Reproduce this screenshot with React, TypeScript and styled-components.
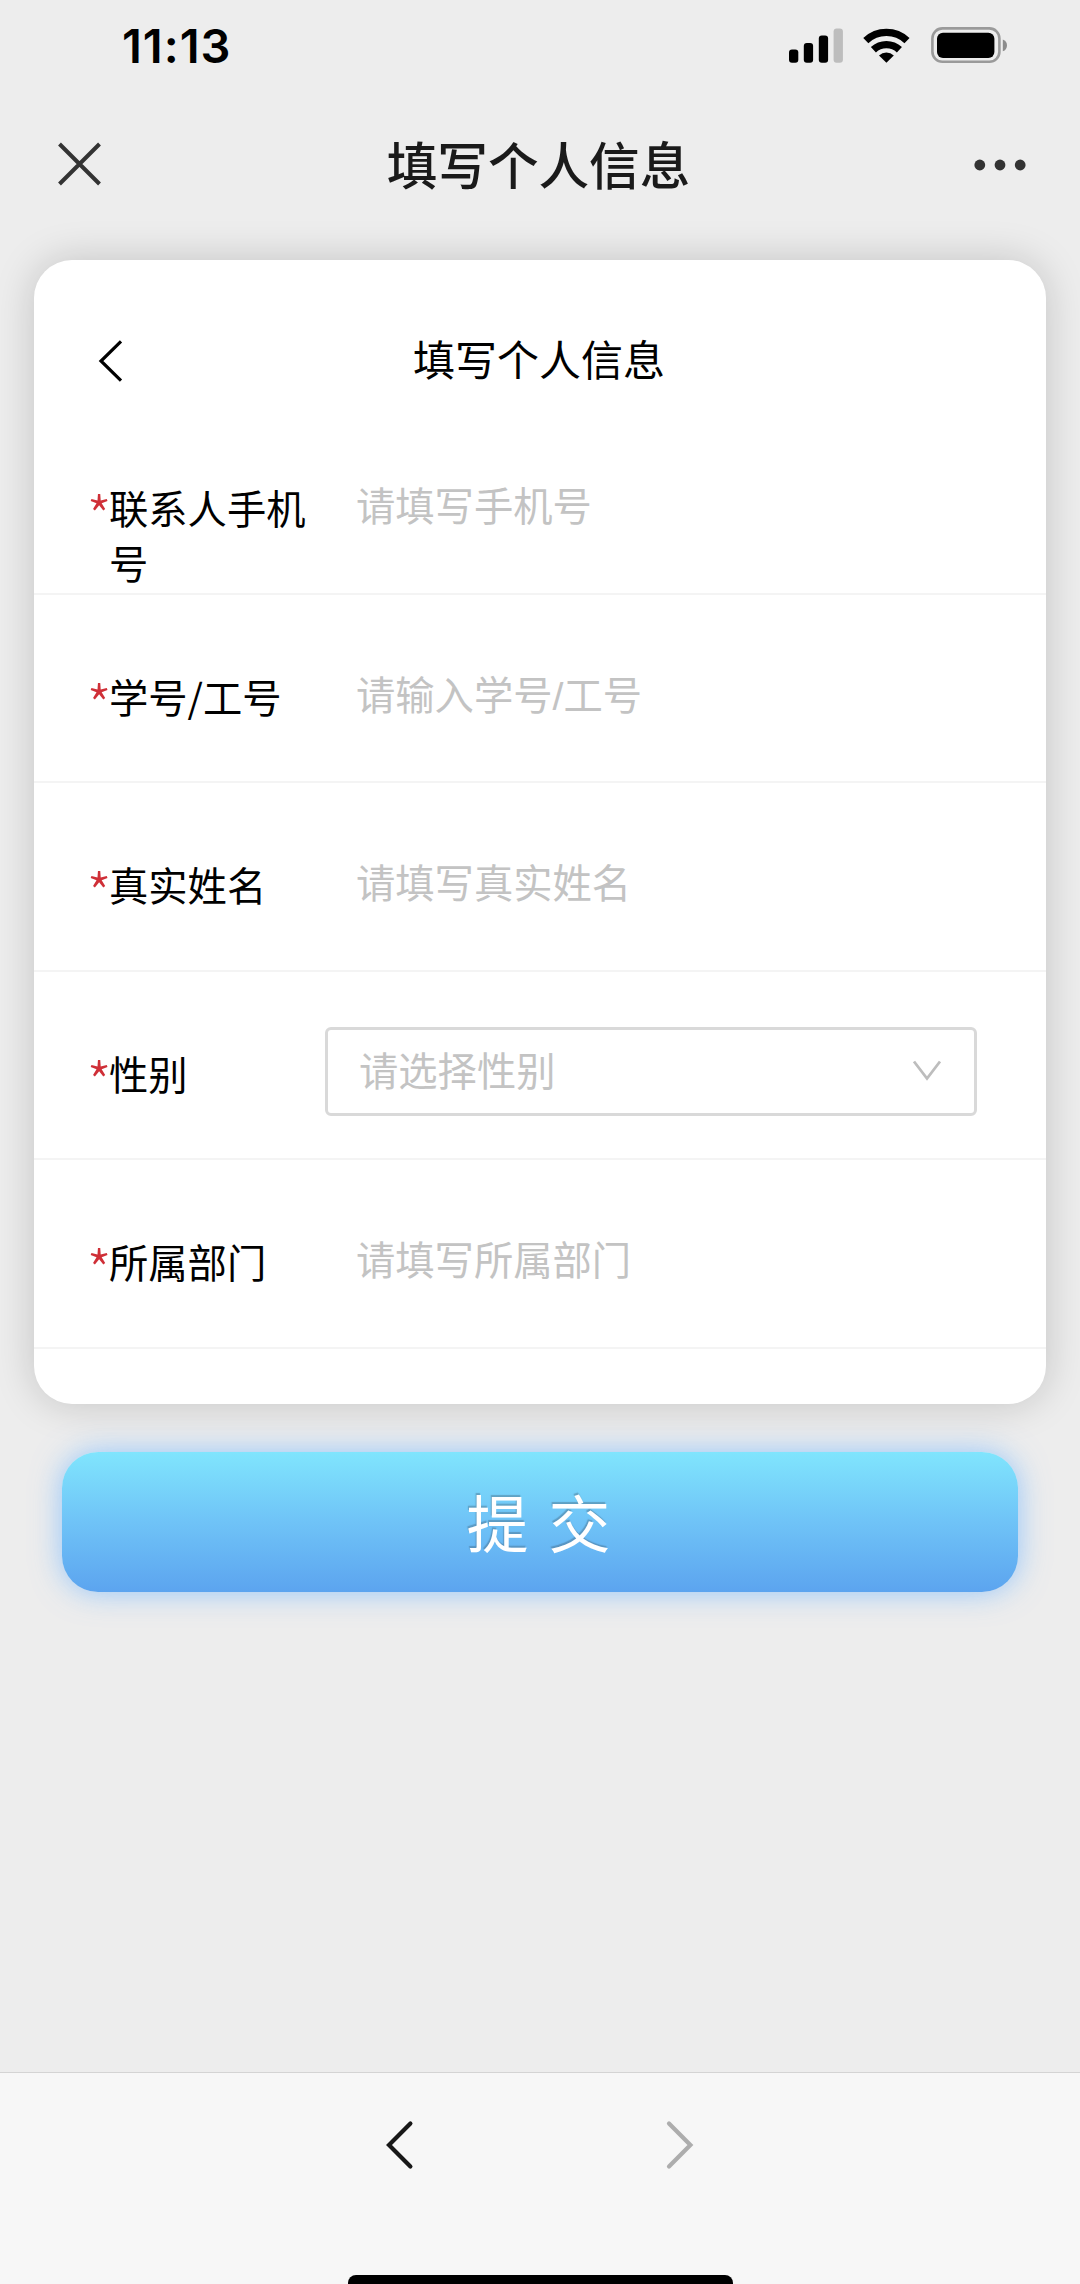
import React from "react";
import styled, { createGlobalStyle } from "styled-components";

const GlobalStyle = createGlobalStyle`
  *, *::before, *::after { box-sizing: border-box; }
  html, body { margin: 0; padding: 0; background: #ededed; }
  body {
    font-family: "Noto Sans CJK SC", "Noto Sans", sans-serif;
    color: #000;
  }
  button, input { font: inherit; }
`;

const Screen = styled.div`
  width: 1080px;
  height: 2284px;
  display: flex;
  flex-direction: column;
  background: #ededed;
  overflow: hidden;
`;

const StatusBar = styled.header`
  height: 92px;
  padding: 0 73px 0 122px;
  display: flex;
  align-items: center;
  justify-content: space-between;
  flex: none;
`;

const Clock = styled.time`
  font-family: Inter, "Liberation Sans", sans-serif;
  font-size: 47px;
  font-weight: 600;
  line-height: 92px;
  letter-spacing: 1px;
`;

const StatusIcons = styled.div`
  margin-bottom: 2px;
  display: flex;
  align-items: center;
`;

const NavBar = styled.nav`
  height: 168px;
  padding: 0 52px 23px;
  display: grid;
  grid-template-columns: 56px 1fr 56px;
  align-items: center;
  flex: none;
`;

const IconButton = styled.button`
  display: flex;
  align-items: center;
  justify-content: center;
  padding: 0;
  border: 0;
  background: none;
  color: inherit;
`;

const NavTitle = styled.h1`
  margin: 0;
  padding: 0 3px 4px 0;
  text-align: center;
  font-size: 50.6px;
  font-weight: 500;
  line-height: 72px;
  color: #1a1a1a;
`;

const Card = styled.section`
  margin: 0 34px;
  height: 1144px;
  flex: none;
  border-radius: 38px;
  background: #fff;
  box-shadow: 0 0 40px rgba(0, 0, 0, 0.18);
`;

const CardHeader = styled.div`
  height: 146px;
  padding: 54px 62px 0;
  display: grid;
  grid-template-columns: 28px 1fr 28px;
  align-items: start;
`;

const CardTitle = styled.h2`
  margin: 0;
  padding-right: 2px;
  text-align: center;
  font-size: 42px;
  font-weight: 400;
  line-height: 87px;
`;

const Row = styled.div`
  height: 188.5px;
  padding-left: 55px;
  display: flex;
  align-items: flex-start;
  border-bottom: 2px solid #f4f4f4;
`;

const Label = styled.label`
  width: 236px;
  padding-top: 73px;
  display: flex;
  font-size: 39.3px;
  line-height: 55px;
`;

const Required = styled.span`
  width: 20px;
  padding-top: 8px;
  flex: none;
  display: flex;
  justify-content: center;
  font-size: 57px;
  font-weight: 300;
  color: #cf2f37;
`;

const LabelText = styled.span`
  width: 200px;
`;

const Field = styled.input`
  width: 640px;
  height: 89px;
  margin-top: 57px;
  padding: 0 0 0 31px;
  border: 0;
  outline: 0;
  background: transparent;
  font-family: "Liberation Sans", "Noto Sans CJK SC", sans-serif;
  font-size: 39.3px;
  &::placeholder { color: #c3c3c3; opacity: 1; }
`;

const Select = styled.div`
  width: 652px;
  height: 89px;
  margin-top: 55px;
  padding: 0 32px 0 31px;
  display: flex;
  align-items: center;
  justify-content: space-between;
  border: 3px solid #d9d9d9;
  border-radius: 6px;
  font-size: 39.3px;
  line-height: 78px;
  color: #c3c3c3;
`;

const SelectText = styled.span`
  padding-bottom: 4px;
`;

const Submit = styled.button`
  margin: 48px 62px 0;
  height: 140px;
  padding: 0 3px 3px 0;
  flex: none;
  border: 0;
  border-radius: 36px;
  background: linear-gradient(180deg, #80e5fd 0%, #6fc3f7 50%, #5ca4ef 100%);
  box-shadow: 0 0 30px rgba(110, 180, 255, 0.7);
  color: #fff;
  font-size: 62px;
  line-height: 134px;
  word-spacing: 6px;
  text-shadow: -1px -2px 1px rgba(60, 90, 110, 0.38);
`;

const BottomBar = styled.footer`
  margin-top: auto;
  height: 212px;
  flex: none;
  display: flex;
  flex-direction: column;
  align-items: center;
  justify-content: space-between;
  border-top: 1px solid #d4d4d4;
  background: #f7f7f7;
`;

const History = styled.div`
  width: 310px;
  padding-top: 46px;
  display: flex;
  justify-content: space-between;
`;

const HomeIndicator = styled.div`
  width: 385px;
  height: 9px;
  border-radius: 8px 8px 0 0;
  background: #000;
`;

const SignalIcon = () => (
  <svg width="56" height="36" viewBox="789 27 56 36">
    <rect x="790" y="49.5" width="9.3" height="13.3" rx="3" />
    <rect x="804.8" y="43" width="9.3" height="19.8" rx="3" />
    <rect x="819.8" y="35.5" width="9.3" height="27.3" rx="3" />
    <rect x="834.6" y="28.5" width="9.3" height="34.3" rx="3" fill="#bdbdbd" />
  </svg>
);

const WifiIcon = () => (
  <svg width="86" height="36" viewBox="845 27 86 36">
    <g fill="none" stroke="#000" strokeWidth="7.4">
      <path d="M866.8 40.6a30 30 0 0 1 41.2 0" />
      <path d="M874.4 49.8a19 19 0 0 1 26 0" />
    </g>
    <path d="M887.4 62.8l-7.4-7.4a11 11 0 0 1 14.8 0z" />
  </svg>
);

const BatteryIcon = () => (
  <svg width="77" height="38" viewBox="930 26 77 38">
    <rect x="932.4" y="28.4" width="67" height="33.4" rx="10" fill="none" stroke="#9a9a9a" strokeWidth="2.6" />
    <rect x="937" y="32.8" width="57.4" height="25.2" rx="6" />
    <path d="M1002.8 39.6c5.6 1.7 5.6 9.9 0 11.6z" fill="#8c8c8c" />
  </svg>
);

const CloseIcon = () => (
  <svg width="44" height="46" viewBox="0.5 0 44 46" fill="none" stroke="#333" strokeWidth="4">
    <path d="M2 2l40 40M42 2L2 42" />
  </svg>
);

const MoreIcon = () => (
  <svg width="52" height="12" viewBox="0 0 52 12" fill="#333">
    <circle cx="5.8" cy="6" r="5.4" />
    <circle cx="26" cy="6" r="5.4" />
    <circle cx="46.2" cy="6" r="5.4" />
  </svg>
);

const CardBackIcon = () => (
  <svg width="28" height="90" viewBox="96 314 28 90" fill="none" stroke="#000" strokeWidth="3.2">
    <path d="M121 341.4L101 361l20 19.6" />
  </svg>
);

const DownIcon = () => (
  <svg width="30" height="22" viewBox="0 0 30 22" fill="none" stroke="#bdbdbd" strokeWidth="2.8">
    <path d="M2 1.5l13 17 13-17" />
  </svg>
);

const HistoryIcon = ({ forward = false }: { forward?: boolean }) => (
  <svg width="30" height="52" viewBox="0 0 30 52" fill="none" strokeWidth="4.2" stroke={forward ? "#adadad" : "#181818"} strokeLinecap="round">
    <path d={forward ? "M4 4.6L25.4 26 4 47.4" : "M25.4 4.6L4 26 25.4 47.4"} />
  </svg>
);

type FieldSpec = { label: string; hint: string; select?: boolean };

const fields: FieldSpec[] = [
  { label: "联系人手机号", hint: "请填写手机号" },
  { label: "学号/工号", hint: "请输入学号/工号" },
  { label: "真实姓名", hint: "请填写真实姓名" },
  { label: "性别", hint: "请选择性别", select: true },
  { label: "所属部门", hint: "请填写所属部门" },
];

export default function App() {
  return (
    <Screen>
      <GlobalStyle />
      <StatusBar>
        <Clock>11:13</Clock>
        <StatusIcons>
          <SignalIcon />
          <WifiIcon />
          <BatteryIcon />
        </StatusIcons>
      </StatusBar>
      <NavBar>
        <IconButton><CloseIcon /></IconButton>
        <NavTitle>填写个人信息</NavTitle>
        <IconButton><MoreIcon /></IconButton>
      </NavBar>
      <Card>
        <CardHeader>
          <IconButton><CardBackIcon /></IconButton>
          <CardTitle>填写个人信息</CardTitle>
        </CardHeader>
        {fields.map((field) => (
          <Row key={field.label}>
            <Label>
              <Required>*</Required>
              <LabelText>{field.label}</LabelText>
            </Label>
            {field.select ? (
              <Select>
                <SelectText>{field.hint}</SelectText>
                <DownIcon />
              </Select>
            ) : (
              <Field placeholder={field.hint} />
            )}
          </Row>
        ))}
      </Card>
      <Submit>提 交</Submit>
      <BottomBar>
        <History>
          <IconButton><HistoryIcon /></IconButton>
          <IconButton><HistoryIcon forward /></IconButton>
        </History>
        <HomeIndicator />
      </BottomBar>
    </Screen>
  );
}
